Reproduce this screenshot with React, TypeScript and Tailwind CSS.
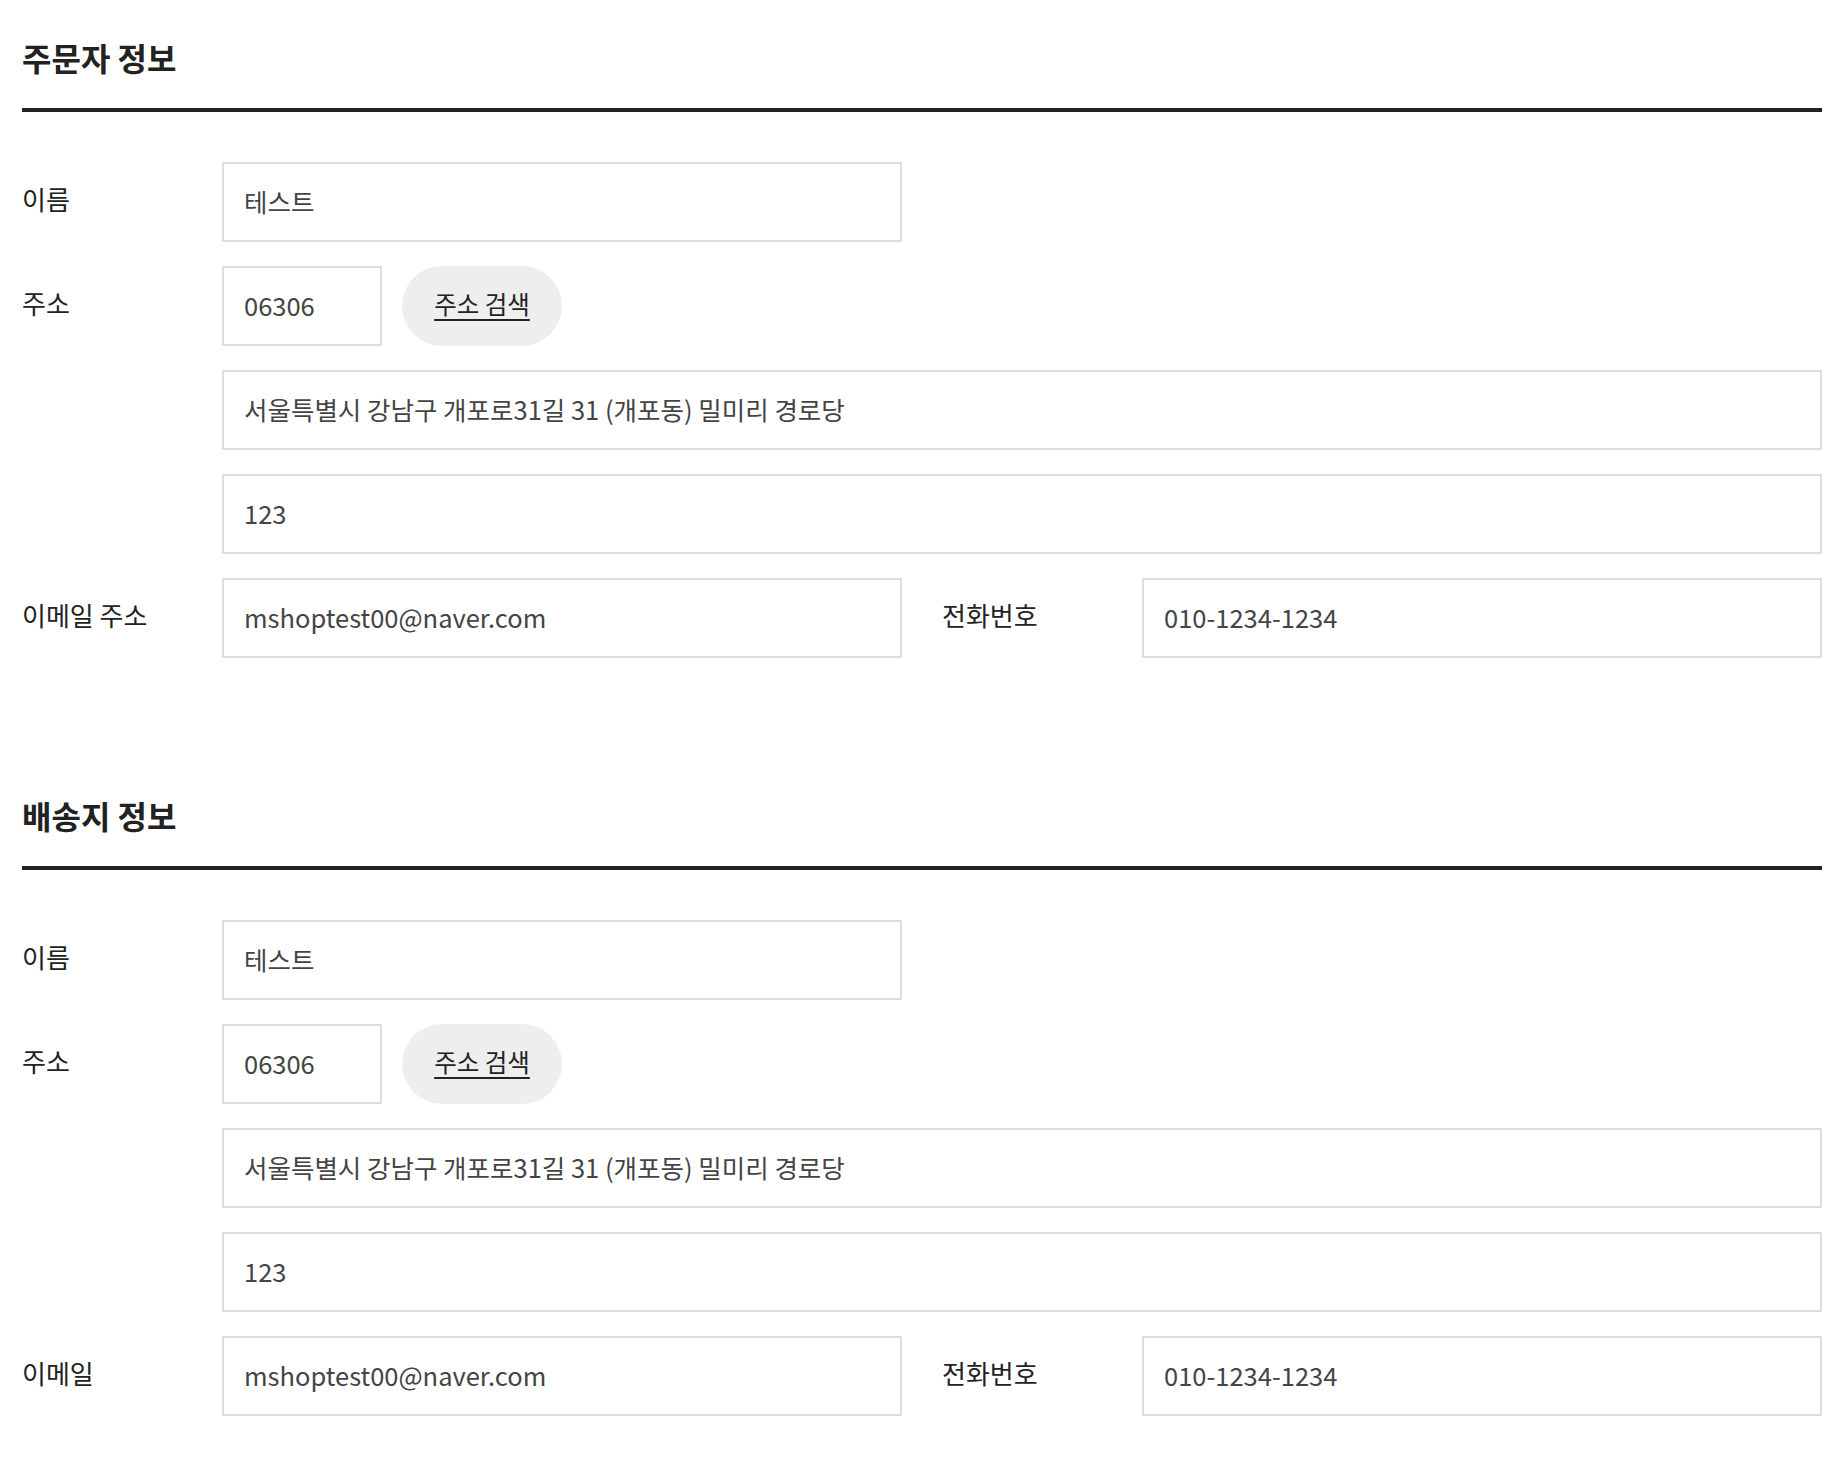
import React from 'react'

/* 주문서 폼: 섹션 제목 + 굵은 구분선, 200px 라벨 칼럼, 80px 높이 입력칸 */
const inputClass =
  'h-[80px] border-2 border-[#dddddd] bg-white px-[20px] pb-[3px] text-[25.5px] text-[#444444] outline-none'

function Label({ children, className = '' }: { children?: string; className?: string }) {
  return (
    <span className={`block w-[200px] shrink-0 pb-[7px] text-[26px] text-[#222222] ${className}`}>
      {children}
    </span>
  )
}

function Field({ value, className }: { value: string; className: string }) {
  return <input readOnly defaultValue={value} className={`${inputClass} ${className}`} />
}

function AddressSection({ title, emailLabel }: { title: string; emailLabel: string }) {
  return (
    <section className="pt-[30px] pb-[100px]">
      <h2 className="border-b-[4px] border-[#222222] pb-[24px] text-[32px] leading-[54px] font-bold text-[#222222]">
        {title}
      </h2>

      <div className="mt-[50px] flex flex-col gap-[24px]">
        <div className="flex items-center">
          <Label>이름</Label>
          <Field value="테스트" className="w-[680px]" />
        </div>

        <div className="flex items-center">
          <Label>주소</Label>
          <Field value="06306" className="w-[160px]" />
          <button
            type="button"
            className="ml-[20px] h-[80px] w-[160px] rounded-full bg-[#eeeeee] pb-[3px] text-[24.5px] text-[#222222] underline underline-offset-[5px]"
          >
            주소 검색
          </button>
        </div>

        <div className="flex items-center">
          <Label />
          <Field value="서울특별시 강남구 개포로31길 31 (개포동) 밀미리 경로당" className="flex-1" />
        </div>

        <div className="flex items-center">
          <Label />
          <Field value="123" className="flex-1" />
        </div>

        <div className="flex items-center">
          <Label>{emailLabel}</Label>
          <Field value="mshoptest00@naver.com" className="w-[680px]" />
          <Label className="ml-[40px]">전화번호</Label>
          <Field value="010-1234-1234" className="w-[680px]" />
        </div>
      </div>
    </section>
  )
}

export default function App() {
  return (
    <div className="min-h-screen bg-white font-['Noto_Sans_CJK_KR','Noto_Sans',sans-serif]">
      <div className="ml-[22px] w-[1800px]">
        <AddressSection title="주문자 정보" emailLabel="이메일 주소" />
        <AddressSection title="배송지 정보" emailLabel="이메일" />
      </div>
    </div>
  )
}
